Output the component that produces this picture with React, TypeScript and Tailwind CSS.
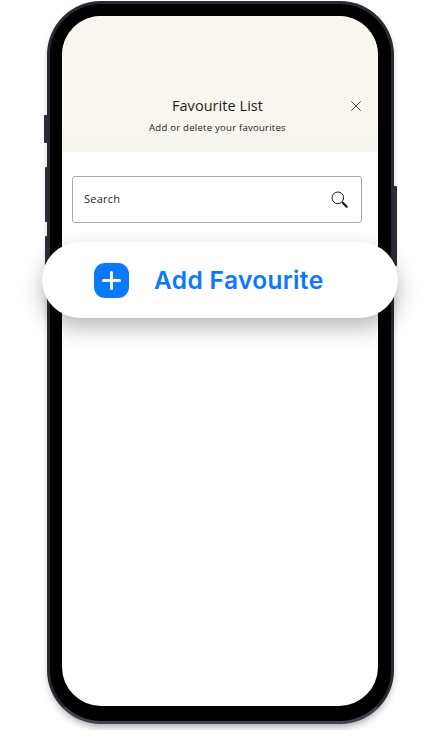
import { X } from 'lucide-react'

function SideButton({ className }: { className: string }) {
  return <div className={`absolute w-[3px] bg-[#2c2c38] ${className}`} />
}

export default function App() {
  return (
    <div className="w-[440px] h-[730px] bg-white overflow-hidden pt-px pl-[47px] font-['Open_Sans',sans-serif]">
      <div className="relative w-[347px] h-[723px]">
        <SideButton className="left-[-3px] top-[114px] h-[28px] rounded-l-[1px]" />
        <SideButton className="left-[-2px] top-[166px] h-[55px] rounded-l-[1px]" />
        <SideButton className="left-[-2px] top-[235px] h-[30px] rounded-l-[1px]" />
        <SideButton className="right-[-3px] top-[185px] h-[80px] rounded-r-[1px]" />

        {/* phone body */}
        <div className="w-full h-full rounded-[54px] bg-black border-[3px] border-[#2a2a35] border-b-[#424250] pt-[12px] pl-[12px] pr-[13px] pb-[15px] shadow-[0_5px_9px_-3px_rgba(0,0,0,0.4)]">
          <div className="w-full h-full rounded-[39px] bg-white overflow-hidden">
            <div className="h-[136px] bg-gradient-to-b from-[#f9f6ef] from-80% to-[#f5f4f0] flex flex-col items-center pt-[80px] pr-[5px] relative">
              <h1 className="text-[14.5px] leading-[20px] text-[#1c1c1c] tracking-[0.05px]">Favourite List</h1>
              <p className="mt-[5px] text-[9.6px] leading-[14px] text-[#222] tracking-[0.22px]">Add or delete your favourites</p>
              <X className="absolute right-[13px] top-[81px] w-[18px] h-[18px] text-[#222]" strokeWidth={1.1} />
            </div>
            <div className="pl-[10px] pr-[16px] pt-[24px]">
              <div className="h-[47px] rounded-[3px] border border-[#a9a9a9] flex items-center justify-between pl-[11px] pr-[13px]">
                <span className="text-[11px] text-[#222] tracking-[0.25px]">Search</span>
                <svg width="17" height="17" viewBox="0 0 17 17" fill="none">
                  <circle cx="6.8" cy="6.8" r="5.8" stroke="#1a1a1a" strokeWidth="1" />
                  <path d="M11 11l1.2 1.2" stroke="#1a1a1a" strokeWidth="1" />
                  <path d="M12 12l3.6 3.6" stroke="#1a1a1a" strokeWidth="2.2" strokeLinecap="round" />
                </svg>
              </div>
            </div>
          </div>
        </div>

        {/* floating action */}
        <div className="absolute left-[-5px] top-[241px] w-[356px] h-[76px] rounded-full bg-white shadow-[0_10px_22px_rgba(0,0,0,0.28)] flex items-center pl-[52px]">
          <div className="w-[35px] h-[35px] rounded-[11px] bg-[#0a78ff] flex items-center justify-center">
            <svg width="19" height="19" viewBox="0 0 19 19" fill="none">
              <path d="M9.5 1.5v16M1.5 9.5h16" stroke="#fff" strokeWidth="3" strokeLinecap="round" />
            </svg>
          </div>
          <span className="ml-[25px] text-[24.5px] font-semibold text-[#0a78ff] font-['Inter',sans-serif] tracking-[0.35px]">Add Favourite</span>
        </div>
      </div>
    </div>
  )
}
